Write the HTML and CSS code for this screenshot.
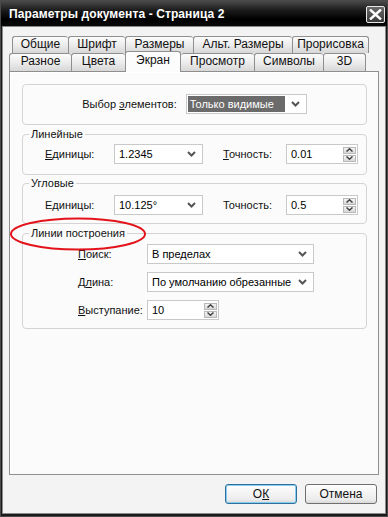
FILE: index.html
```html
<!DOCTYPE html>
<html lang="ru">
<head>
    <meta charset="UTF-8">
    <link rel="stylesheet" href="styles.css">
    <title>Параметры документа</title>
</head>
<body>
    <div class="window">
        <div class="titlebar">
            <span class="title">Параметры документа - Страница 2</span>
            <span class="close">
                <svg width="13" height="11" viewBox="0 0 13 11"><path d="M1 0.5 L12 10.5 M12 0.5 L1 10.5" stroke="#fff" stroke-width="2.4"/></svg>
            </span>
        </div>

        <div class="client">
            <!-- Tabs, two rows -->
            <div class="tabs">
                <div class="tabrow row1">
                    <div class="tab" style="width:56px">Общие</div>
                    <div class="tab" style="width:57px">Шрифт</div>
                    <div class="tab" style="width:68px">Размеры</div>
                    <div class="tab" style="width:99px">Альт. Размеры</div>
                    <div class="tab" style="width:77px">Прорисовка</div>
                </div>
                <div class="tabrow row2">
                    <div class="tab" style="width:62px">Разное</div>
                    <div class="tab" style="width:54px">Цвета</div>
                    <div class="tab active" style="width:56px">Экран</div>
                    <div class="tab" style="width:73px">Просмотр</div>
                    <div class="tab" style="width:69px">Символы</div>
                    <div class="tab" style="width:43px">3D</div>
                </div>
            </div>

            <div class="panel">
                <div class="group first">
                    <span class="label">Выбор <u>э</u>лементов:</span>
                    <div class="combo w-sel">
                        <span class="val selected">Только видимые</span>
                        <svg class="chev" width="9" height="6" viewBox="0 0 9 6"><path d="M1 1 L4.5 4.5 L8 1" fill="none" stroke="#555" stroke-width="2"/></svg>
                    </div>
                </div>

                <fieldset class="group grid-2">
                    <legend>Линейные</legend>
                    <span class="label"><u>Е</u>диницы:</span>
                    <div class="combo w-unit">
                        <span class="val">1.2345</span>
                        <svg class="chev" width="9" height="6" viewBox="0 0 9 6"><path d="M1 1 L4.5 4.5 L8 1" fill="none" stroke="#555" stroke-width="2"/></svg>
                    </div>
                    <span class="label second"><u>Т</u>очность:</span>
                    <div class="spin">
                        <span class="val">0.01</span>
                        <div class="spin-btns">
                            <span class="sb"><svg width="7" height="4" viewBox="0 0 7 4"><path d="M0.5 3.5 L3.5 0.8 L6.5 3.5" fill="none" stroke="#444" stroke-width="1.5"/></svg></span>
                            <span class="sb"><svg width="7" height="4" viewBox="0 0 7 4"><path d="M0.5 0.5 L3.5 3.2 L6.5 0.5" fill="none" stroke="#444" stroke-width="1.5"/></svg></span>
                        </div>
                    </div>
                </fieldset>

                <fieldset class="group grid-2 angles">
                    <legend>Угловые</legend>
                    <span class="label">Единицы:</span>
                    <div class="combo w-unit">
                        <span class="val">10.125°</span>
                        <svg class="chev" width="9" height="6" viewBox="0 0 9 6"><path d="M1 1 L4.5 4.5 L8 1" fill="none" stroke="#555" stroke-width="2"/></svg>
                    </div>
                    <span class="label second">Точность:</span>
                    <div class="spin">
                        <span class="val">0.5</span>
                        <div class="spin-btns">
                            <span class="sb"><svg width="7" height="4" viewBox="0 0 7 4"><path d="M0.5 3.5 L3.5 0.8 L6.5 3.5" fill="none" stroke="#444" stroke-width="1.5"/></svg></span>
                            <span class="sb"><svg width="7" height="4" viewBox="0 0 7 4"><path d="M0.5 0.5 L3.5 3.2 L6.5 0.5" fill="none" stroke="#444" stroke-width="1.5"/></svg></span>
                        </div>
                    </div>
                </fieldset>

                <fieldset class="group grid-lines">
                    <legend>Линии построения</legend>
                    <span class="label"><u>П</u>оиск:</span>
                    <div class="combo w-long">
                        <span class="val">В пределах</span>
                        <svg class="chev" width="9" height="6" viewBox="0 0 9 6"><path d="M1 1 L4.5 4.5 L8 1" fill="none" stroke="#555" stroke-width="2"/></svg>
                    </div>
                    <span class="label">Д<u>л</u>ина:</span>
                    <div class="combo w-long">
                        <span class="val">По умолчанию обрезанные</span>
                        <svg class="chev" width="9" height="6" viewBox="0 0 9 6"><path d="M1 1 L4.5 4.5 L8 1" fill="none" stroke="#555" stroke-width="2"/></svg>
                    </div>
                    <span class="label"><u>В</u>ыступание:</span>
                    <div class="spin">
                        <span class="val">10</span>
                        <div class="spin-btns">
                            <span class="sb"><svg width="7" height="4" viewBox="0 0 7 4"><path d="M0.5 3.5 L3.5 0.8 L6.5 3.5" fill="none" stroke="#444" stroke-width="1.5"/></svg></span>
                            <span class="sb"><svg width="7" height="4" viewBox="0 0 7 4"><path d="M0.5 0.5 L3.5 3.2 L6.5 0.5" fill="none" stroke="#444" stroke-width="1.5"/></svg></span>
                        </div>
                    </div>
                </fieldset>

                <!-- red marker drawn over the group title -->
                <svg class="mark" width="140" height="36" viewBox="0 0 140 36">
                    <ellipse cx="69" cy="17" rx="67" ry="15.5" fill="none" stroke="#e3131b" stroke-width="2"/>
                </svg>
            </div>

            <div class="buttons">
                <button class="btn default">О<u>К</u></button>
                <button class="btn">Отмена</button>
            </div>
        </div>
    </div>
</body>
</html>
```

FILE: styles.css
```css
body {
    margin: 0;
    background: #000;
    font-family: 'Liberation Sans', Arial, sans-serif;
    font-size: 11px;
    color: #000;
}
.window {
    width: 388px;
    height: 517px;
    box-sizing: border-box;
    background: #1a1a1a;
    border: 1px solid #4a4a4a;
    display: flex;
    flex-direction: column;
}
.titlebar {
    height: 26px;
    display: flex;
    align-items: center;
    justify-content: space-between;
    padding: 0 2px 0 8px;
    background: linear-gradient(#4a4a4a, #1c1c1c 35%, #000 70%, #0a0a0a);
}
.title {
    color: #fff;
    font-weight: bold;
    font-size: 12px;
    letter-spacing: 0.1px;
}
.close {
    width: 19px;
    height: 17px;
    box-sizing: border-box;
    border: 1px solid #e8e8e8;
    border-radius: 2px;
    background: linear-gradient(#6a6a6a, #3a3a3a);
    display: flex;
    align-items: center;
    justify-content: center;
}
.client {
    flex: 1;
    margin: 0 2px 3px;
    background: #f3f3f3;
    box-shadow: 0 0 0 1px #8a8a8a;
    padding: 9px 0 0;
    display: flex;
    flex-direction: column;
}
.tabs {
    display: flex;
    flex-direction: column;
}
.tabrow {
    display: flex;
    height: 17px;
}
.row1 {
    margin-left: 9px;
}
.row2 {
    margin-left: 6px;
    height: 18px;
}
.tab {
    box-sizing: border-box;
    border: 1px solid #8f8f8f;
    border-bottom: none;
    border-right: none;
    border-radius: 3px 3px 0 0;
    background: linear-gradient(#fcfcfc, #ececec 50%, #d7d7d7);
    text-align: center;
    line-height: 15px;
    font-size: 12px;
    color: #111;
}
.tab:last-child {
    border-right: 1px solid #8f8f8f;
}
.tab.active {
    position: relative;
    margin-top: -2px;
    height: 21px;
    background: #fcfcfc;
    border-right: 1px solid #8f8f8f;
    line-height: 17px;
    z-index: 2;
}
.tab.active + .tab {
    border-left: none;
}
.panel {
    position: relative;
    height: 404px;
    box-sizing: border-box;
    margin: 0 6px 0 6px;
    border: 1px solid #8f8f8f;
    box-shadow: inset 1px 1px 0 #fff;
    background: #fbfbfb;
    padding: 12px 11px 0 12px;
}
.group {
    margin: 0;
    border: 1px solid #d4d4d4;
    border-radius: 4px;
    background: #fbfbfb;
    min-width: 0;
}
.group legend {
    padding: 0 2px;
    line-height: 14px;
    color: #111;
}
.first {
    height: 41px;
    box-sizing: border-box;
    display: flex;
    align-items: center;
    justify-content: center;
    gap: 9px;
    padding-bottom: 1px;
}
.grid-2 {
    display: grid;
    grid-template-columns: 69px 89px 83px 72px;
    align-items: center;
    padding: 3px 0 10px 22px;
    margin-top: 2px;
}
.grid-2 legend {
    margin-left: -16px;
}
.grid-2 .second {
    margin-left: 20px;
}
.angles {
    margin-top: 1px;
    padding-top: 5px;
    padding-bottom: 8px;
}
.grid-lines {
    display: grid;
    grid-template-columns: 69px 167px;
    row-gap: 8px;
    align-items: center;
    padding: 4px 0 8px 55px;
    margin-top: 2px;
}
.grid-lines legend {
    margin-left: -49px;
}
.label {
    white-space: nowrap;
    color: #111;
}
.combo,
.spin {
    height: 20px;
    box-sizing: border-box;
    border: 1px solid #c9c9c9;
    background: #fff;
    display: flex;
    align-items: center;
    padding: 0 3px 0 4px;
    white-space: nowrap;
    font-size: 11px;
}
.combo .val,
.spin .val {
    flex: 1;
}
.chev {
    margin-right: 3px;
}
.w-sel {
    width: 121px;
    padding-left: 1px;
}
.w-unit {
    width: 89px;
}
.w-long {
    width: 167px;
}
.spin {
    width: 72px;
    padding-right: 1px;
}
.selected {
    background: #6b6b6b;
    color: #fff;
    line-height: 16px;
    padding-left: 2px;
    margin-right: 6px;
}
.spin-btns {
    display: flex;
    flex-direction: column;
    gap: 1px;
}
.sb {
    width: 13px;
    height: 7px;
    box-sizing: border-box;
    border: 1px solid #b8b8b8;
    background: linear-gradient(#f4f4f4, #d8d8d8);
    display: flex;
    align-items: center;
    justify-content: center;
}
.mark {
    position: absolute;
    left: -1px;
    top: 145px;
}
.buttons {
    display: flex;
    justify-content: flex-end;
    gap: 8px;
    padding: 9px 8px 0 0;
}
.btn {
    width: 72px;
    height: 20px;
    font-family: 'Liberation Sans', Arial, sans-serif;
    font-size: 12px;
    color: #111;
    border: 1px solid #6f6f6f;
    border-radius: 3px;
    background: linear-gradient(#fefefe, #ececec 80%, #d9d9d9);
    padding: 0;
}
.btn.default {
    border-color: #2f6f9a;
    box-shadow: inset 0 0 0 1px #86cdf0;
}
```
